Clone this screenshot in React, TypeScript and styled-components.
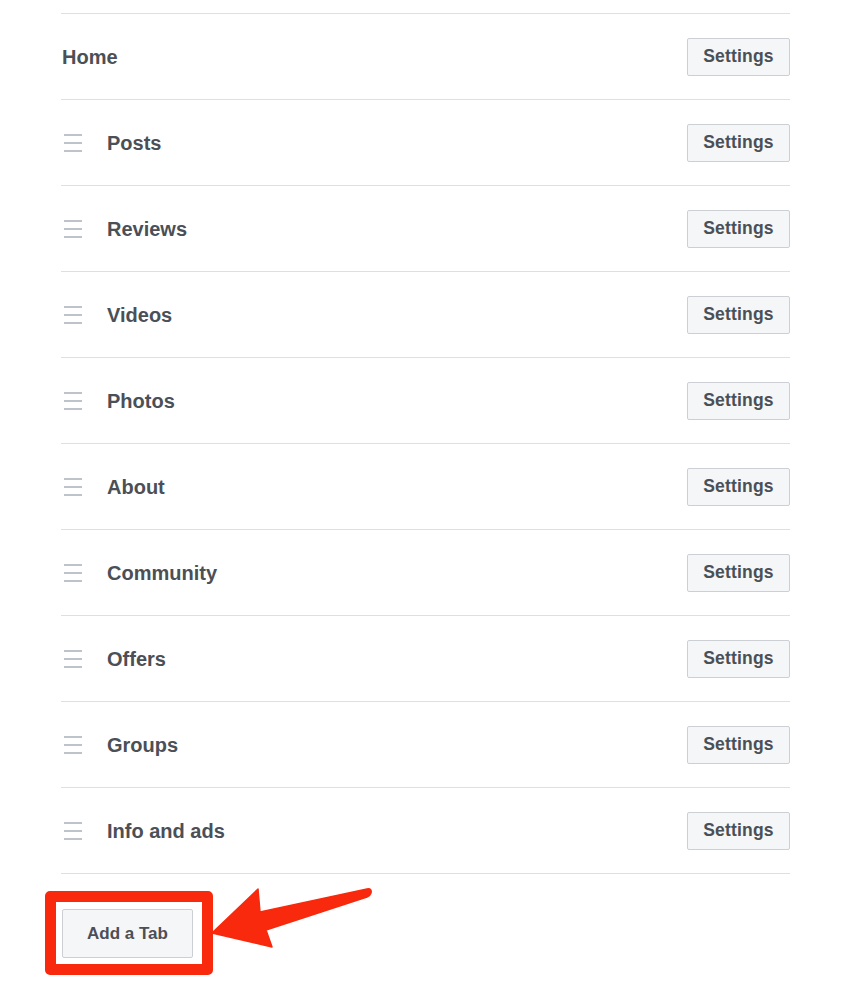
import styled, { createGlobalStyle } from "styled-components";

const GlobalStyle = createGlobalStyle`
  body {
    margin: 0;
    background: #ffffff;
    font-family: "Liberation Sans", Arial, sans-serif;
  }
`;

const Container = styled.div`
  padding: 13px 60px 0 61px;
  width: 729px;
`;

const TabList = styled.ul`
  list-style: none;
  margin: 0;
  padding: 0;
  border-top: 1px solid #dddfe2;
`;

const Row = styled.li`
  height: 85px;
  display: flex;
  align-items: center;
  border-bottom: 1px solid #dddfe2;
`;

const Handle = styled.span`
  width: 18px;
  height: 18px;
  margin-left: 3px;
  margin-right: 25px;
  display: flex;
  flex-direction: column;
  justify-content: space-between;
  span {
    display: block;
    height: 2px;
    background: #bec2c9;
  }
`;

const Label = styled.span<{ $home?: boolean }>`
  flex: 1;
  font-size: 20px;
  font-weight: bold;
  color: #4b4f56;
  padding-top: 1px;
  margin-left: ${(props) => (props.$home ? "1px" : "0")};
`;

const Button = styled.button`
  font-family: "Liberation Sans", Arial, sans-serif;
  font-weight: bold;
  color: #4b4f56;
  background: #f5f6f7;
  border: 1px solid #ccd0d5;
  border-radius: 2px;
  cursor: pointer;
`;

const SettingsBtn = styled(Button)`
  width: 103px;
  height: 38px;
  font-size: 17.5px;
  letter-spacing: 0.2px;
`;

const Footer = styled.div`
  position: relative;
  padding: 35px 0 26px 1px;
`;

const AddBtn = styled(Button)`
  position: relative;
  width: 131px;
  height: 49px;
  font-size: 17px;
  &::after {
    content: "";
    position: absolute;
    left: -18px;
    top: -19px;
    width: 146px;
    height: 62px;
    border: 11px solid #f8290c;
    border-radius: 5px;
    pointer-events: none;
  }
`;

const Arrow = styled.svg`
  position: absolute;
  left: 148px;
  top: 13px;
  width: 164px;
  height: 62px;
  overflow: visible;
`;

const tabs = [
  "Posts",
  "Reviews",
  "Videos",
  "Photos",
  "About",
  "Community",
  "Offers",
  "Groups",
  "Info and ads",
];

function App() {
  return (
    <>
      <GlobalStyle />
      <Container>
        <TabList>
          <Row>
            <Label $home>Home</Label>
            <SettingsBtn>Settings</SettingsBtn>
          </Row>
          {tabs.map((tab) => (
            <Row key={tab}>
              <Handle>
                <span />
                <span />
                <span />
              </Handle>
              <Label>{tab}</Label>
              <SettingsBtn>Settings</SettingsBtn>
            </Row>
          ))}
        </TabList>
        <Footer>
          <AddBtn>Add a Tab</AddBtn>
          <Arrow viewBox="209 887 164 62">
            <path
              d="M212 933 L258 889 L260 912 L367 889 Q372 888 371 893 Q370 896 367 897 L266 930 L272 947 Z"
              fill="#f8290c"
              stroke="#f8290c"
              strokeWidth="1.5"
              strokeLinejoin="round"
            />
          </Arrow>
        </Footer>
      </Container>
    </>
  );
}

export default App;
